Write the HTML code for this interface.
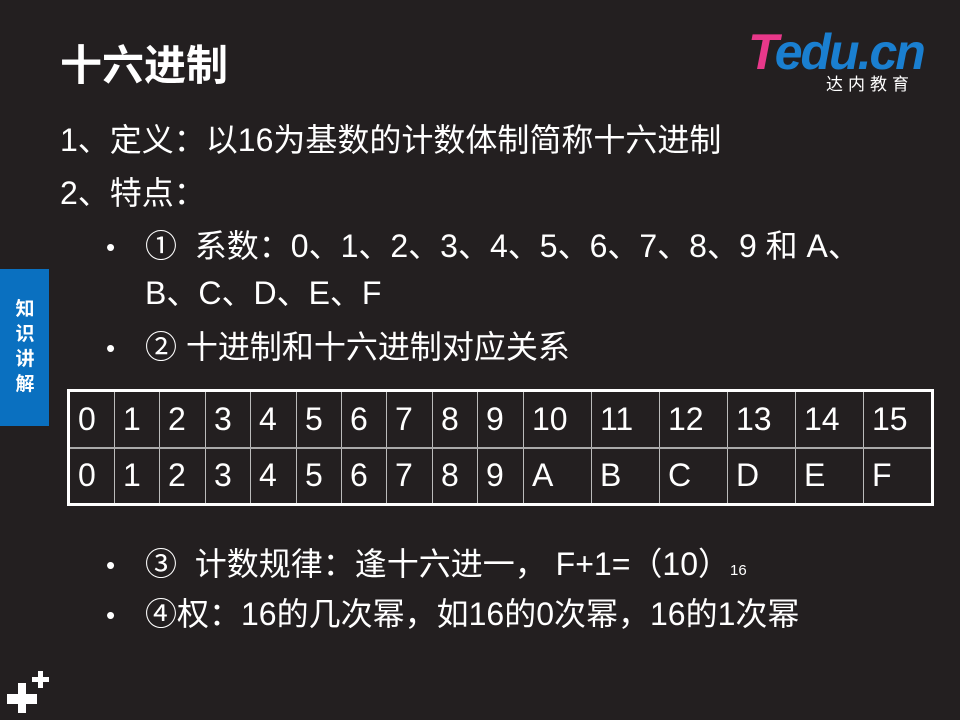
<!DOCTYPE html>
<html><head><meta charset="utf-8"><style>
html,body{margin:0;padding:0}
body{width:960px;height:720px;background:#231f20;position:relative;overflow:hidden;font-family:"Liberation Sans","Noto Sans CJK SC",sans-serif;color:#fff}
.t{position:absolute;white-space:nowrap;font-size:32px;line-height:38px}
.b{position:absolute;font-size:26px;left:106px;line-height:30px}
table{position:absolute;left:67px;top:389px;border-collapse:collapse;border:3px solid #fff}
td{border:1px solid #bbb;height:57px;padding:0 0 0 8px;font-size:32px;text-align:left;vertical-align:middle;box-sizing:border-box}
tr:first-child td{border-bottom:2px solid #aaa}
</style></head><body>
<div class="t" style="left:60px;top:42px;font-size:42px;font-weight:bold;line-height:48px">十六进制</div>
<div style="position:absolute;left:748px;top:24px;font-size:50px;font-weight:bold;font-style:italic;letter-spacing:-2px;line-height:56px"><span style="color:#e8388a">T</span><span style="color:#1a7fd0">edu.cn</span></div>
<div style="position:absolute;left:826px;top:75px;font-size:17px;letter-spacing:5px;line-height:20px">达内教育</div>
<div style="position:absolute;left:0;top:269px;width:49px;height:157px;background:#0a70c0"></div>
<div style="position:absolute;left:12px;top:297px;width:26px;font-size:19px;font-weight:bold;line-height:25px;text-align:center">知<br>识<br>讲<br>解</div>
<div class="t" style="left:60px;top:121px">1、定义：以16为基数的计数体制简称十六进制</div>
<div class="t" style="left:60px;top:174px">2、特点：</div>
<div class="b" style="top:232px">•</div>
<div class="t" style="left:145px;top:227px">①&nbsp; 系数：0、1、2、3、4、5、6、7、8、9 和 A、</div>
<div class="t" style="left:145px;top:274px">B、C、D、E、F</div>
<div class="b" style="top:333px">•</div>
<div class="t" style="left:145px;top:328px">② 十进制和十六进制对应关系</div>
<table>
<tr><td style="width:46px">0</td><td style="width:45px">1</td><td style="width:46px">2</td><td style="width:45px">3</td><td style="width:46px">4</td><td style="width:45px">5</td><td style="width:45px">6</td><td style="width:46px">7</td><td style="width:45px">8</td><td style="width:46px">9</td><td style="width:68px">10</td><td style="width:68px">11</td><td style="width:68px">12</td><td style="width:68px">13</td><td style="width:68px">14</td><td style="width:69px">15</td></tr>
<tr><td>0</td><td>1</td><td>2</td><td>3</td><td>4</td><td>5</td><td>6</td><td>7</td><td>8</td><td>9</td><td>A</td><td>B</td><td>C</td><td>D</td><td>E</td><td>F</td></tr>
</table>
<div class="b" style="top:550px">•</div>
<div class="t" style="left:145px;top:545px">③&nbsp; 计数规律：逢十六进一， F+1=（10）<span style="font-size:15px">16</span></div>
<div class="b" style="top:600px">•</div>
<div class="t" style="left:145px;top:595px">④权：16的几次幂，如16的0次幂，16的1次幂</div>
<div style="position:absolute;left:7px;top:694px;width:30px;height:10px;background:#fff"></div>
<div style="position:absolute;left:18px;top:683px;width:8px;height:30px;background:#fff"></div>
<div style="position:absolute;left:32px;top:677px;width:17px;height:5px;background:#fff"></div>
<div style="position:absolute;left:38px;top:671px;width:5px;height:17px;background:#fff"></div>
</body></html>
